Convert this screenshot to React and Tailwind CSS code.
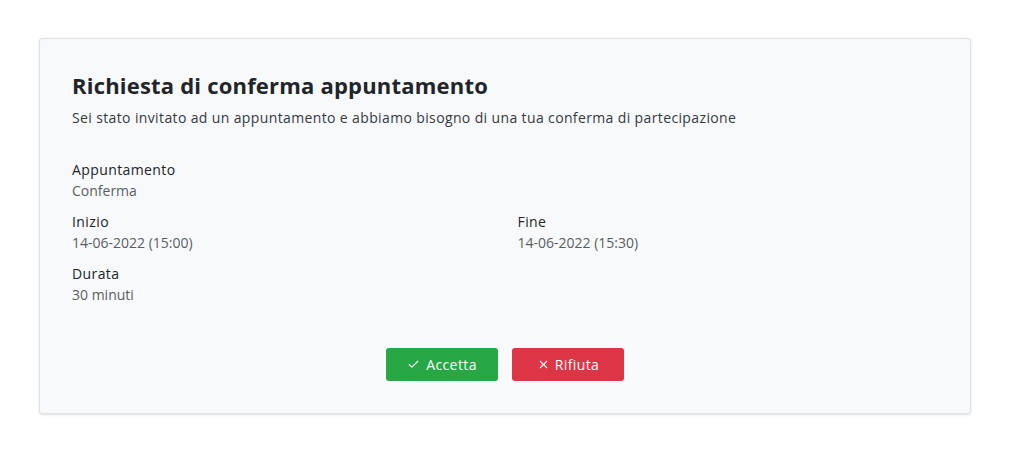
import React from 'react';
import { Check, X } from 'lucide-react';

const Field = ({ label, value }) => (
    <div className="mb-[10px]">
        <div className="text-[14px] leading-[21px] font-medium tracking-[0.4px] text-[#212529]">{label}</div>
        <div className="text-[14px] leading-[21px] font-normal text-[#595e63]">{value}</div>
    </div>
);

const App = () => {
    return (
        <div className="min-h-screen bg-white pt-[38px] px-[39px]" style={{ fontFamily: '"Open Sans", "Liberation Sans", sans-serif' }}>
            <div className="w-[932px] bg-[#f8f9fa] border border-[#dee2e6] rounded-[3px] shadow-sm px-[32px] pt-[33px] pb-[32px]">
                <h1 className="text-[22px] leading-[27px] font-bold tracking-[0.2px] text-[#212529]">Richiesta di conferma appuntamento</h1>
                <p className="mt-[8px] text-[14px] leading-[21px] tracking-[0.37px] text-[#343a40]">
                    Sei stato invitato ad un appuntamento e abbiamo bisogno di una tua conferma di partecipazione
                </p>

                <div className="mt-[31px]">
                    <Field label="Appuntamento" value="Conferma" />
                    <div className="grid grid-cols-2 gap-x-[25px]">
                        <Field label="Inizio" value="14-06-2022 (15:00)" />
                        <Field label="Fine" value="14-06-2022 (15:30)" />
                    </div>
                    <Field label="Durata" value="30 minuti" />
                </div>

                <div className="mt-[43px] flex justify-center gap-[14px]">
                    <button className="w-[112px] h-[33px] rounded-[3px] bg-[#28a745] text-white text-[14px] font-medium tracking-[0.4px] flex items-center justify-center gap-[6px]">
                        <Check size={13} strokeWidth={2} /> Accetta
                    </button>
                    <button className="w-[112px] h-[33px] rounded-[3px] bg-[#dc3545] text-white text-[14px] font-medium tracking-[0.4px] flex items-center justify-center gap-[5px]">
                        <X size={13} strokeWidth={2} /> Rifiuta
                    </button>
                </div>
            </div>
        </div>
    );
};

export default App;
